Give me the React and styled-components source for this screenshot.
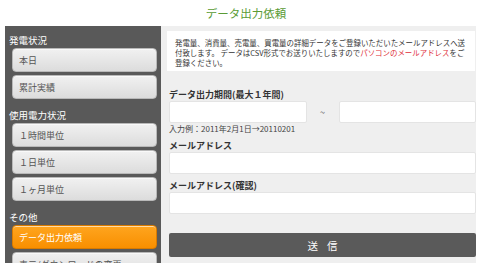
import React from 'react';
import styled, { createGlobalStyle } from 'styled-components';

const GlobalStyle = createGlobalStyle`
  html, body {
    margin: 0;
    padding: 0;
    background: #fff;
    font-family: "Noto Sans CJK JP", "Noto Sans", sans-serif;
  }
`;

const Page = styled.div`
  width: 480px;
  height: 263px;
  overflow: hidden;
  display: flex;
  flex-direction: column;
`;

const Header = styled.header`
  height: 26px;
  line-height: 26px;
  text-align: center;
  font-size: 11.5px;
  color: #5a9b35;
  padding-left: 12px;
`;

const Body = styled.div`
  flex: 1;
  display: flex;
  padding: 0 4px 0 5px;
  min-width: 0;
  overflow: hidden;
`;

const Sidebar = styled.nav`
  width: 156px;
  flex-shrink: 0;
  background: #595959;
  padding: 7px 4px 0 7px;
  box-sizing: border-box;
`;

const GroupLabel = styled.div`
  font-size: 9.5px;
  line-height: 14px;
  height: 14px;
  color: #fff;
  margin: ${(p) => (p.$first ? '0' : '9px')} 0 1px -3px;
`;

const MenuList = styled.div`
  display: flex;
  flex-direction: column;
  gap: 3px;
`;

const MenuButton = styled.div`
  height: 24px;
  box-sizing: border-box;
  border-radius: 4px;
  padding-left: 6px;
  display: flex;
  align-items: center;
  font-size: 9px;
  white-space: nowrap;
  overflow: hidden;
  color: ${(p) => (p.$active ? '#fff' : '#555')};
  background: ${(p) =>
    p.$active
      ? 'linear-gradient(#ffa51f, #f88f00)'
      : 'linear-gradient(#f1f1f1, #dcdcdc)'};
  border: 1px solid ${(p) => (p.$active ? '#d97b00' : '#b9b9b9')};
  box-shadow: inset 0 1px 0 rgba(255, 255, 255, 0.6);
`;

const Main = styled.main`
  flex: 1;
  min-width: 0;
  overflow: hidden;
  background: #efefef;
  padding: 5px 0 0 6px;
  box-sizing: border-box;
`;

const Notice = styled.div`
  background: #fff;
  height: 40px;
  box-sizing: border-box;
  padding: 7px 0 0 8px;
  margin-right: 1px;
  font-size: 7.45px;
  line-height: 10px;
  color: #333;
  white-space: nowrap;
  overflow: hidden;
`;

const Red = styled.span`
  color: #e0303a;
`;

const Form = styled.div`
  padding: 18px 0 0 2px;
  display: flex;
  flex-direction: column;
`;

const FieldLabel = styled.div`
  font-size: 9px;
  font-weight: bold;
  line-height: 12px;
  color: #333;
  margin-top: ${(p) => p.$mt || 0}px;
`;

const Hint = styled.div`
  font-size: 8px;
  line-height: 12px;
  color: #444;
`;

const Row = styled.div`
  display: flex;
  align-items: center;
`;

const Tilde = styled.span`
  width: 32px;
  text-align: center;
  font-size: 9px;
  color: #555;
`;

const TextInput = styled.input`
  display: block;
  flex: 1;
  height: 22px;
  box-sizing: border-box;
  border: 1px solid #e4e4e4;
  border-radius: 2px;
  background: #fff;
  padding: 0 1px;
  font-size: 9px;
  outline: none;
  min-width: 0;
  caret-color: #000;
`;

const SubmitButton = styled.button`
  margin-top: 19px;
  height: 24px;
  border: none;
  border-radius: 2px;
  background: #5a5a5a;
  color: #fff;
  font-family: inherit;
  font-size: 10.5px;
  letter-spacing: 9px;
  text-indent: 9px;
  cursor: pointer;
`;

function App() {
  return (
    <Page>
      <GlobalStyle />
      <Header>データ出力依頼</Header>
      <Body>
        <Sidebar>
          <GroupLabel $first>発電状況</GroupLabel>
          <MenuList>
            <MenuButton>本日</MenuButton>
            <MenuButton>累計実績</MenuButton>
          </MenuList>
          <GroupLabel>使用電力状況</GroupLabel>
          <MenuList>
            <MenuButton>１時間単位</MenuButton>
            <MenuButton>１日単位</MenuButton>
            <MenuButton>１ヶ月単位</MenuButton>
          </MenuList>
          <GroupLabel>その他</GroupLabel>
          <MenuList>
            <MenuButton $active>データ出力依頼</MenuButton>
            <MenuButton>表示/ダウンロードの変更</MenuButton>
          </MenuList>
        </Sidebar>
        <Main>
          <Notice>
            発電量、消費量、売電量、買電量の詳細データをご登録いただいたメールアドレスへ送
            <br />
            付致します。 データはCSV形式でお送りいたしますので<Red>パソコンのメールアドレス</Red>をご
            <br />
            登録ください。
          </Notice>
          <Form>
            <FieldLabel>データ出力期間(最大１年間)</FieldLabel>
            <Row>
              <TextInput />
              <Tilde>~</Tilde>
              <TextInput />
            </Row>
            <Hint>入力例：2011年2月1日→20110201</Hint>
            <FieldLabel $mt={5}>メールアドレス</FieldLabel>
            <Row>
              <TextInput />
            </Row>
            <FieldLabel $mt={6}>メールアドレス(確認)</FieldLabel>
            <Row>
              <TextInput autoFocus />
            </Row>
            <SubmitButton>送信</SubmitButton>
          </Form>
        </Main>
      </Body>
    </Page>
  );
}

export default App;
